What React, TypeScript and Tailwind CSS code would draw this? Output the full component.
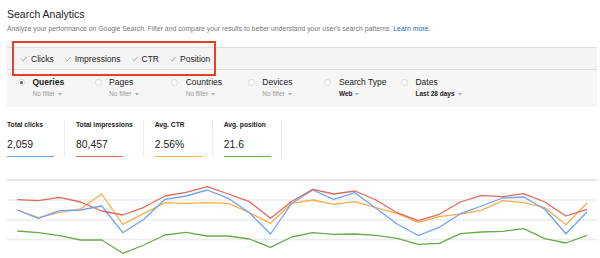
import React from 'react';

const xs = (i: number) => 17.3 + 21.1 * i;

const series: { color: string; ys: number[] }[] = [
  {
    color: '#6aaa4b',
    ys: [231, 232.7, 235.7, 240, 240, 253.3, 245, 235, 232.3, 236, 236, 239, 247.3, 237, 232.7, 234.3, 234, 235.3, 238.3, 244.3, 243.3, 233.7, 232, 231.3, 228.7, 238.7, 243, 235.3],
  },
  {
    color: '#f7ae4d',
    ys: [210, 217.7, 212.3, 209, 194, 224.3, 213.3, 202.7, 203.3, 202.7, 203.3, 212.7, 223.3, 203.3, 200, 204.3, 201.7, 207.7, 213.3, 222.3, 216.7, 214, 210.3, 200.7, 202.7, 207.7, 224.7, 203],
  },
  {
    color: '#6ea3f6',
    ys: [210, 218.3, 210.7, 210, 206, 232.7, 219.3, 199.3, 196, 190, 198.3, 212.7, 234, 203.5, 190, 199.3, 192.7, 208.3, 224, 235.5, 227.3, 213.7, 206, 198, 197, 209.3, 233.7, 212],
  },
  {
    color: '#e2685c',
    ys: [199.7, 200.7, 197.3, 202, 211, 215, 207.3, 196, 192.3, 186.7, 194, 201.7, 218.3, 201.5, 189.3, 194, 191, 200, 212.7, 220.7, 214.3, 202, 195.3, 196.7, 193.7, 202, 216, 209.3],
  },
];

const metrics = ['Clicks', 'Impressions', 'CTR', 'Position'];

const filters = [
  { label: 'Queries', sub: 'No filter', active: true },
  { label: 'Pages', sub: 'No filter' },
  { label: 'Countries', sub: 'No filter' },
  { label: 'Devices', sub: 'No filter' },
  { label: 'Search Type', sub: 'Web', strong: true },
  { label: 'Dates', sub: 'Last 28 days', strong: true },
];

const stats = [
  { label: 'Total clicks', value: '2,059', line: 'bg-[#6ea3f6]' },
  { label: 'Total impressions', value: '80,457', line: 'bg-[#e2685c]' },
  { label: 'Avg. CTR', value: '2.56%', line: 'bg-[#f7ae4d]' },
  { label: 'Avg. position', value: '21.6', line: 'bg-[#6aaa4b]' },
];

const Caret = () => (
  <svg width="4" height="3" viewBox="0 0 4 3" className="ml-[3px]">
    <path d="M0 0 L4 0 L2 2.5 Z" fill="#aaa" />
  </svg>
);

const App: React.FC = () => {
  return (
    <div className="relative w-[600px] h-[258px] overflow-hidden bg-white font-['Liberation_Sans',Arial,sans-serif] text-[#222]">
      <div className="px-[7px] pr-[3px]">
        {/* Header */}
        <h1 className="pt-[8px] text-[10.5px] leading-[12px] text-[#222]">Search Analytics</h1>
        <p className="mt-[5px] text-[6.85px] leading-[8px] text-[#777] whitespace-nowrap">
          Analyze your performance on Google Search. Filter and compare your results to better understand your user's search patterns.{' '}
          <span className="text-[#1a5fd0]">Learn more.</span>
        </p>

        {/* Metric toggles */}
        <div className="mt-[14px] h-[23px] flex items-center gap-[11px] pl-[14px] bg-[#f4f4f4] border-y border-[#dedede]">
          {metrics.map((m) => (
            <div key={m} className="flex items-center gap-[4px]">
              <svg width="6" height="6" viewBox="0 0 6 6">
                <path d="M0.6 3.2 L2.3 4.8 L5.5 1" stroke="#999" strokeWidth="0.9" fill="none" />
              </svg>
              <span className="text-[8.5px] leading-[10px] text-[#222]">{m}</span>
            </div>
          ))}
        </div>

        {/* Dimension filters */}
        <div className="h-[37px] flex pl-[11px] pt-[7px] bg-[#f6f6f6]">
          {filters.map((f) => (
            <div key={f.label} className="w-[76.6px] flex gap-[7.5px]">
              <div className="mt-[1.5px] w-[7px] h-[7px] rounded-full bg-white border border-[#d6d6d6] flex items-center justify-center shrink-0">
                {f.active && <div className="w-[3px] h-[3px] rounded-full bg-[#555]" />}
              </div>
              <div className="flex flex-col">
                <span className={`text-[8.5px] leading-[10px] whitespace-nowrap ${f.active ? 'font-bold' : ''}`}>{f.label}</span>
                <span className={`mt-[3px] flex items-center text-[6.5px] leading-[8px] whitespace-nowrap ${f.strong ? 'font-bold text-[#222]' : 'text-[#999]'}`}>
                  {f.sub}
                  <Caret />
                </span>
              </div>
            </div>
          ))}
        </div>

        {/* Totals */}
        <div className="mt-[14px] flex">
          {stats.map((s, i) => (
            <div key={s.label} className={`${i === 0 ? 'pl-0' : 'pl-[11px]'} pr-[10px] border-r border-[#ebebeb]`}>
              <div className="min-w-[47px] flex flex-col">
                <span className="text-[6.7px] leading-[8px] font-bold whitespace-nowrap">{s.label}</span>
                <span className="mt-[10px] text-[10.4px] leading-[12px]">{s.value}</span>
                <div className={`mt-[5px] w-[47px] h-[1.3px] ${s.line}`} />
              </div>
            </div>
          ))}
        </div>
      </div>

      {/* Chart */}
      <svg width="600" height="88" viewBox="0 170 600 88" className="mt-[13px] block">
        <line x1="7" x2="597" y1="180" y2="180" stroke="#cfcfcf" strokeWidth="1" />
        {[200, 220, 239.5].map((y) => (
          <line key={y} x1="7" x2="597" y1={y} y2={y} stroke="#ececec" strokeWidth="1.3" />
        ))}
        {series.map((s) => (
          <polyline
            key={s.color}
            points={s.ys.map((y, i) => `${xs(i).toFixed(1)},${y}`).join(' ')}
            fill="none"
            stroke={s.color}
            strokeWidth="1.3"
            strokeLinejoin="round"
          />
        ))}
      </svg>

      {/* Annotation box */}
      <div className="absolute left-[12px] top-[41px] w-[204px] h-[35px] border-2 border-[#e4412c]" />
    </div>
  );
};

export default App;
